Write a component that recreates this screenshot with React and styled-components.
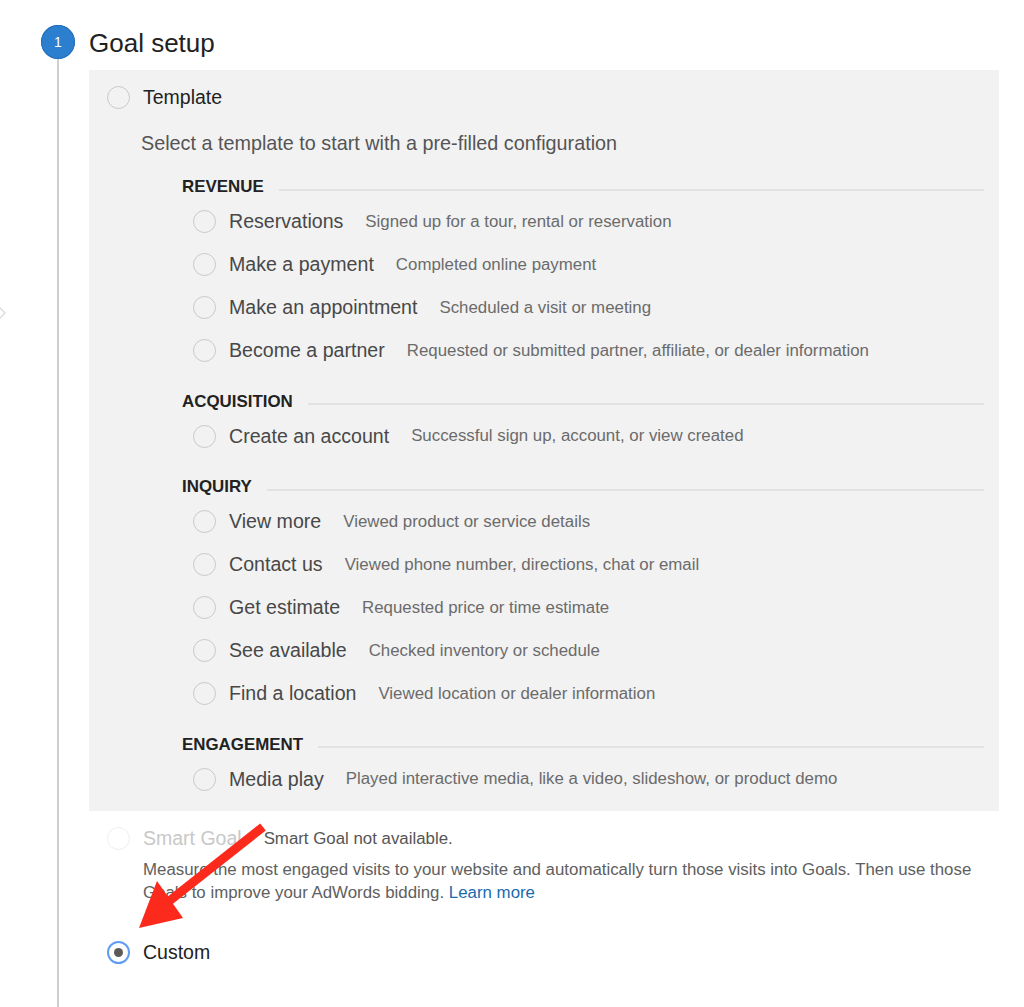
import React from 'react';
import styled, { createGlobalStyle } from 'styled-components';

const GlobalStyle = createGlobalStyle`
  html, body {
    margin: 0;
    padding: 0;
    background: #fff;
  }
  body {
    font-family: "Liberation Sans", Arial, Helvetica, sans-serif;
    color: #222;
  }
`;

const sections = [
  {
    title: 'REVENUE',
    items: [
      ['Reservations', 'Signed up for a tour, rental or reservation'],
      ['Make a payment', 'Completed online payment'],
      ['Make an appointment', 'Scheduled a visit or meeting'],
      ['Become a partner', 'Requested or submitted partner, affiliate, or dealer information'],
    ],
  },
  {
    title: 'ACQUISITION',
    items: [['Create an account', 'Successful sign up, account, or view created']],
  },
  {
    title: 'INQUIRY',
    items: [
      ['View more', 'Viewed product or service details'],
      ['Contact us', 'Viewed phone number, directions, chat or email'],
      ['Get estimate', 'Requested price or time estimate'],
      ['See available', 'Checked inventory or schedule'],
      ['Find a location', 'Viewed location or dealer information'],
    ],
  },
  {
    title: 'ENGAGEMENT',
    items: [['Media play', 'Played interactive media, like a video, slideshow, or product demo']],
  },
];

const Page = styled.div`
  position: relative;
  display: flex;
  min-height: 1007px;
  overflow: hidden;
`;

const Rail = styled.div`
  position: relative;
  width: 89px;
  flex: none;
  display: flex;
  flex-direction: column;
`;

const StepBadge = styled.div`
  margin: 25px 0 0 41px;
  width: 34px;
  height: 34px;
  border-radius: 50%;
  background: #2c7fce;
  box-shadow: inset 0 0 0 1px #2570b8;
  color: #fff;
  font-size: 14px;
  display: flex;
  align-items: center;
  justify-content: center;
`;

const RailLine = styled.div`
  flex: 1;
  margin-left: 57px;
  width: 2px;
  background: #cfcfcf;
`;

const Chevron = styled.svg`
  position: absolute;
  left: -6px;
  top: 302px;
`;

const Main = styled.div`
  flex: 1;
  padding-right: 25px;
`;

const Title = styled.h1`
  margin: 25px 0 11px;
  height: 34px;
  line-height: 36px;
  font-size: 26px;
  font-weight: normal;
  color: #222;
`;

const Panel = styled.div`
  background: #f2f2f2;
  padding: 12px 15px 10px 18px;
`;

const OptionRow = styled.label`
  display: flex;
  align-items: center;
  gap: 13px;
  height: 30px;
  font-size: 19.5px;
  color: ${p => (p.$muted ? '#c8c8c8' : '#222')};
`;

const Radio = styled.span`
  flex: none;
  box-sizing: border-box;
  width: 23px;
  height: 23px;
  border-radius: 50%;
  border: ${p =>
    p.$checked ? '2px solid #5f9cf2' : p.$faded ? '1.5px solid #eeeeee' : '1.5px solid #c9c9c9'};
  background: ${p => (p.$faded ? '#fff' : 'transparent')};
  display: flex;
  align-items: center;
  justify-content: center;

  &::after {
    content: '';
    display: ${p => (p.$checked ? 'block' : 'none')};
    width: 9px;
    height: 9px;
    border-radius: 50%;
    background: #5a5a5a;
  }
`;

const Intro = styled.p`
  margin: 19px 0 0 34px;
  font-size: 19.8px;
  line-height: 24px;
  color: #555;
`;

const Section = styled.div`
  margin-left: 75px;
  margin-top: ${p => (p.$first ? 22 : 19.5)}px;
`;

const SectionHeader = styled.div`
  display: flex;
  align-items: center;
  gap: 15px;
  height: 20px;
  margin-bottom: 3px;
  font-size: 16.9px;
  font-weight: bold;
  color: #222;

  &::after {
    content: '';
    flex: 1;
    height: 2px;
    margin-top: 5px;
    background: #e2e2e2;
  }
`;

const ItemRow = styled.div`
  display: flex;
  align-items: center;
  height: 43px;
  margin-left: 11px;
`;

const ItemLabel = styled.span`
  margin-left: 13px;
  font-size: 19.6px;
  color: #484848;
`;

const ItemDesc = styled.span`
  margin-left: 22px;
  font-size: 16.85px;
  color: #6b6b6b;
`;

const Below = styled.div`
  padding: 13px 0 0 18px;
`;

const Note = styled.span`
  margin-left: 9px;
  font-size: 16.85px;
  color: #555;
`;

const Desc = styled.p`
  margin: 4px 0 0 36px;
  width: 850px;
  font-size: 16.85px;
  line-height: 23px;
  color: #606060;
`;

const Link = styled.span`
  color: #1a6aae;
  cursor: pointer;
`;

const CustomWrap = styled.div`
  margin-top: 34px;
`;

const Arrow = styled.svg`
  position: absolute;
  left: 0;
  top: 0;
  pointer-events: none;
`;

export default function App() {
  return (
    <>
      <GlobalStyle />
      <Page>
        <Rail>
          <StepBadge>1</StepBadge>
          <RailLine />
          <Chevron width="14" height="22" viewBox="0 0 14 22">
            <polyline points="1,1 11,11 1,21" fill="none" stroke="#dcdcdc" strokeWidth="1.5" />
          </Chevron>
        </Rail>
        <Main>
          <Title>Goal setup</Title>
          <Panel>
            <OptionRow>
              <Radio />
              Template
            </OptionRow>
            <Intro>Select a template to start with a pre-filled configuration</Intro>
            {sections.map((s, i) => (
              <Section key={s.title} $first={i === 0}>
                <SectionHeader>{s.title}</SectionHeader>
                {s.items.map(([label, desc]) => (
                  <ItemRow key={label}>
                    <Radio />
                    <ItemLabel>{label}</ItemLabel>
                    <ItemDesc>{desc}</ItemDesc>
                  </ItemRow>
                ))}
              </Section>
            ))}
          </Panel>
          <Below>
            <OptionRow $muted>
              <Radio $faded />
              Smart Goal
              <Note>Smart Goal not available.</Note>
            </OptionRow>
            <Desc>
              Measure the most engaged visits to your website and automatically turn those visits into
              Goals. Then use those Goals to improve your AdWords bidding. <Link>Learn more</Link>
            </Desc>
            <CustomWrap>
              <OptionRow>
                <Radio $checked />
                Custom
              </OptionRow>
            </CustomWrap>
          </Below>
        </Main>
        <Arrow width="1024" height="1007" viewBox="0 0 1024 1007">
          <line x1="263" y1="827" x2="168" y2="902" stroke="#fb2a1c" strokeWidth="9" />
          <polygon points="139,928 157,881 183,918" fill="#fb2a1c" />
        </Arrow>
      </Page>
    </>
  );
}
